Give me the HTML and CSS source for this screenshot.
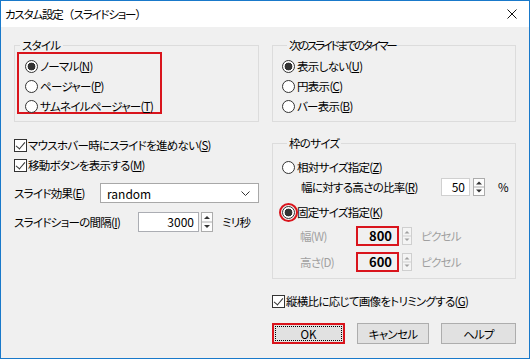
FILE: index.html
```html
<!DOCTYPE html>
<html lang="ja">
<head>
    <meta charset="UTF-8">
    <title>カスタム設定（スライドショー）</title>
    <link rel="stylesheet" href="styles.css">
</head>
<body>

<div class="dialog">
    <div class="titlebar">
        <span class="title">カスタム設定<span class="paren">（</span>スライドショー<span class="paren">）</span></span>
        <svg class="close" width="10" height="10" viewBox="0 0 10 10">
            <path d="M0.5 0.5 L9.5 9.5 M9.5 0.5 L0.5 9.5" stroke="#111" stroke-width="1" fill="none"/>
        </svg>
    </div>

    <div class="client">
        <!-- left column -->
        <div class="col">
            <fieldset class="group group-style">
                <legend>スタイル</legend>
                <div class="mark-box">
                    <div class="opt"><span class="radio on"></span>ノーマル(<u>N</u>)</div>
                    <div class="opt"><span class="radio"></span>ページャー(<u>P</u>)</div>
                    <div class="opt"><span class="radio"></span>サムネイルページャー(<u>T</u>)</div>
                </div>
            </fieldset>

            <div class="checks">
                <div class="opt"><span class="check on"></span>マウスホバー時にスライドを進めない(<u>S</u>)</div>
                <div class="opt"><span class="check on"></span>移動ボタンを表示する(<u>M</u>)</div>
            </div>

            <div class="field-row effect-row">
                <span class="field-label effect-label">スライド効果(<u>E</u>)</span>
                <div class="select">
                    <span>random</span>
                    <svg width="9" height="5" viewBox="0 0 9 5">
                        <path d="M0.5 0.5 L4.5 4.5 L8.5 0.5" stroke="#333" stroke-width="1" fill="none"/>
                    </svg>
                </div>
            </div>

            <div class="field-row interval-row">
                <span class="field-label interval-label">スライドショーの間隔(<u>I</u>)</span>
                <div class="numbox interval-box">3000</div>
                <svg class="spin" width="12" height="20" viewBox="0 0 12 20">
                    <rect x="0.5" y="0.5" width="11" height="19" fill="#fdfdfd" stroke="#acacac"/>
                    <line x1="0" y1="10" x2="12" y2="10" stroke="#acacac"/>
                    <path d="M3 7 L6 4 L9 7 Z" fill="#333"/>
                    <path d="M3 13 L6 16 L9 13 Z" fill="#333"/>
                </svg>
                <span class="unit">ミリ秒</span>
            </div>
        </div>

        <!-- right column -->
        <div class="col">
            <fieldset class="group group-timer">
                <legend>次のスライドまでのタイマー</legend>
                <div class="opt"><span class="radio on"></span>表示しない(<u>U</u>)</div>
                <div class="opt"><span class="radio"></span>円表示(<u>C</u>)</div>
                <div class="opt"><span class="radio"></span>バー表示(<u>B</u>)</div>
            </fieldset>

            <fieldset class="group group-size">
                <legend>枠のサイズ</legend>
                <div class="opt"><span class="radio"></span>相対サイズ指定(<u>Z</u>)</div>

                <div class="field-row ratio-row">
                    <span class="field-label ratio-label">幅に対する高さの比率(<u>R</u>)</span>
                    <div class="numbox ratio-box">50</div>
                    <svg class="spin" width="12" height="18" viewBox="0 0 12 18">
                        <rect x="0.5" y="0.5" width="11" height="17" fill="#fdfdfd" stroke="#acacac"/>
                        <line x1="0" y1="9" x2="12" y2="9" stroke="#acacac"/>
                        <path d="M3 6.5 L6 3.5 L9 6.5 Z" fill="#333"/>
                        <path d="M3 11.5 L6 14.5 L9 11.5 Z" fill="#333"/>
                    </svg>
                    <span class="unit percent">%</span>
                </div>

                <div class="opt fixed-row"><span class="radio on marked"></span>固定サイズ指定(<u>K</u>)</div>

                <div class="field-row px-row">
                    <span class="field-label px-label off">幅(W)</span>
                    <div class="numbox px-box">800</div>
                    <svg class="spin" width="10" height="18" viewBox="0 0 10 18">
                        <rect x="0.5" y="0.5" width="9" height="17" fill="#f4f4f4" stroke="#cfcfcf"/>
                        <line x1="0" y1="9" x2="10" y2="9" stroke="#cfcfcf"/>
                        <path d="M2.5 6.5 L5 4 L7.5 6.5 Z" fill="#a0a0a0"/>
                        <path d="M2.5 11.5 L5 14 L7.5 11.5 Z" fill="#a0a0a0"/>
                    </svg>
                    <span class="unit off">ピクセル</span>
                </div>

                <div class="field-row px-row px-row-2">
                    <span class="field-label px-label off">高さ(D)</span>
                    <div class="numbox px-box">600</div>
                    <svg class="spin" width="10" height="18" viewBox="0 0 10 18">
                        <rect x="0.5" y="0.5" width="9" height="17" fill="#f4f4f4" stroke="#cfcfcf"/>
                        <line x1="0" y1="9" x2="10" y2="9" stroke="#cfcfcf"/>
                        <path d="M2.5 6.5 L5 4 L7.5 6.5 Z" fill="#a0a0a0"/>
                        <path d="M2.5 11.5 L5 14 L7.5 11.5 Z" fill="#a0a0a0"/>
                    </svg>
                    <span class="unit off">ピクセル</span>
                </div>
            </fieldset>

            <div class="opt trim-row"><span class="check on"></span>縦横比に応じて画像をトリミングする(<u>G</u>)</div>

            <div class="buttons">
                <button class="btn btn-ok"><span>OK</span></button>
                <button class="btn btn-cancel">キャンセル</button>
                <button class="btn btn-help">ヘルプ</button>
            </div>
        </div>
    </div>
</div>

</body>
</html>
```

FILE: styles.css
```css
* {
    box-sizing: border-box;
}
html, body {
    margin: 0;
    padding: 0;
}
body {
    font-family: "Noto Sans CJK JP", "Noto Sans", sans-serif;
    font-size: 11.5px;
    letter-spacing: -0.7px;
    font-feature-settings: "palt";
    color: #000;
    background: #f0f0f0;
}
u {
    text-decoration: underline;
    text-underline-offset: 1px;
}

.dialog {
    width: 530px;
    height: 359px;
    border: 1px solid #1979ca;
    background: #f0f0f0;
    display: flex;
    flex-direction: column;
}
.titlebar {
    height: 26px;
    background: #fff;
    display: flex;
    align-items: center;
    justify-content: space-between;
    padding: 0 12px 0 4px;
    flex-shrink: 0;
}
.title {
    line-height: 16px;
    font-size: 11.5px;
    letter-spacing: -1.2px;
}
.title .paren {
    font-feature-settings: normal;
    letter-spacing: -0.5px;
}

.client {
    display: grid;
    grid-template-columns: 245px 244px;
    column-gap: 13px;
    padding: 11px 13px 0 13px;
}
.col {
    display: flex;
    flex-direction: column;
}

/* group boxes */
.group {
    margin: 0;
    padding: 0;
    border: 1px solid #dcdcdc;
    min-width: 0;
}
.group legend {
    margin-left: 5px;
    padding: 0 2px;
    line-height: 14px;
}
.group-timer {
    padding: 4px 0 5px 9px;
}
.group-timer legend {
    letter-spacing: -2.3px;
}
.group-size {
    margin-top: 14px;
    padding: 7px 0 6px 9px;
}

.mark-box {
    margin: 0 0 7px 2px;
    width: 145px;
    height: 62px;
    border: 2px solid #d9141c;
    padding: 2px 0 0 6px;
}

/* option rows */
.opt {
    display: flex;
    align-items: center;
    height: 20px;
    line-height: 20px;
    white-space: nowrap;
}
.radio {
    width: 13px;
    height: 13px;
    border: 1px solid #333;
    border-radius: 50%;
    background: #fff;
    margin-right: 2px;
    flex-shrink: 0;
}
.radio.on {
    background: radial-gradient(circle, #333 0 3.6px, #fff 4.2px);
}
.radio.marked {
    outline: 2px solid #d9141c;
    outline-offset: 1px;
}
.check {
    width: 13px;
    height: 13px;
    border: 1px solid #333;
    background: #fff;
    margin-right: 1px;
    flex-shrink: 0;
    position: relative;
}
.check.on::after {
    content: "";
    position: absolute;
    left: 3px;
    top: 0px;
    width: 4px;
    height: 8px;
    border-right: 1.5px solid #333;
    border-bottom: 1.5px solid #333;
    transform: rotate(40deg);
}

.checks {
    margin-top: 13px;
}

/* label + control rows */
.field-row {
    display: flex;
    align-items: center;
    height: 20px;
    white-space: nowrap;
}
.field-label {
    flex-shrink: 0;
}
.effect-row {
    margin-top: 8px;
}
.effect-label {
    width: 86px;
}
.select {
    width: 159px;
    height: 20px;
    background: #fff;
    border: 1px solid #a8a8a8;
    display: flex;
    align-items: center;
    justify-content: space-between;
    padding: 0 8px 0 6px;
    font-size: 12px;
    letter-spacing: 0;
}
.interval-row {
    margin-top: 9px;
}
.interval-label {
    width: 124px;
}
.numbox {
    height: 20px;
    border: 1px solid #abadb3;
    background: #fff;
    text-align: right;
    line-height: 18px;
    padding-right: 4px;
    font-size: 12px;
    letter-spacing: 0;
}
.interval-box {
    width: 61px;
}
.spin {
    margin-left: 2px;
    flex-shrink: 0;
}
.unit {
    margin-left: 9px;
}
.off {
    color: #a0a0a0;
}

.ratio-row {
    padding-left: 19px;
}
.ratio-label {
    width: 140px;
}
.ratio-box {
    width: 29px;
    height: 18px;
    line-height: 16px;
    border-color: #d0d0d0;
}
.ratio-row .spin {
    margin-left: 3px;
}
.percent {
    margin-left: 13px;
}

.fixed-row {
    margin-top: 5px;
}
.px-row {
    margin-top: 4px;
    padding-left: 18px;
}
.px-row-2 {
    margin-top: 6px;
}
.px-label {
    width: 56px;
}
.px-box {
    width: 43px;
    border: 2px solid #d9141c;
    background: #f0f0f0;
    font-weight: bold;
    font-size: 13px;
    line-height: 16px;
    padding-right: 5px;
}
.px-row .spin {
    margin-left: 3px;
}

/* bottom */
.trim-row {
    margin-top: 12px;
}
.buttons {
    display: flex;
    gap: 12px;
    margin-top: 12px;
}
.btn {
    height: 21px;
    padding: 0;
    font-family: inherit;
    font-size: 11.5px;
    letter-spacing: -0.7px;
    font-feature-settings: "palt";
    color: #000;
    background: #e1e1e1;
    border: 1px solid #adadad;
    line-height: 18px;
}
.btn-ok {
    width: 73px;
    border: 2px solid #d9141c;
    outline: 1px dotted #000;
    outline-offset: -4px;
    letter-spacing: 0;
}
.btn-cancel {
    width: 72px;
}
.btn-help {
    width: 75px;
}
```
